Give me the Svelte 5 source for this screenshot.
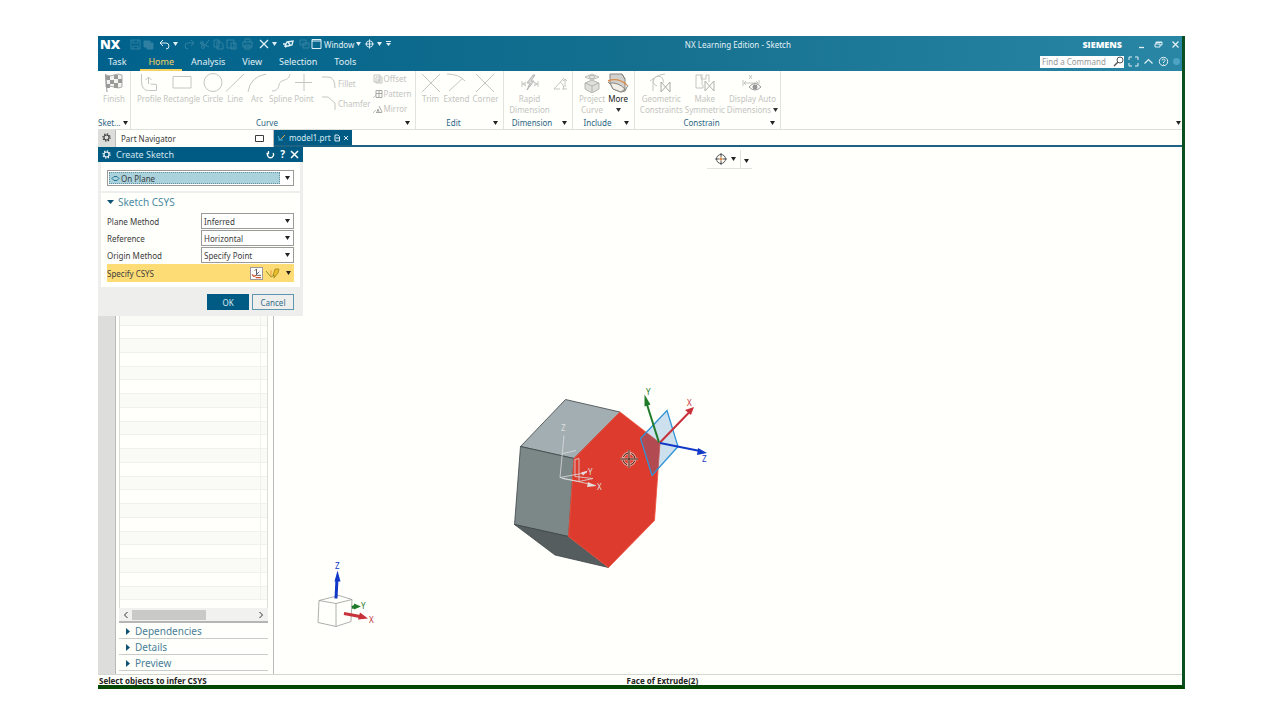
<script lang="ts">
  type Tool = { icon: string; label: string; label2?: string; caret?: boolean; active?: boolean };

  const menus = ['Task', 'Home', 'Analysis', 'View', 'Selection', 'Tools'];
  let activeMenu = $state('Home');

  const curveTools: Tool[] = [
    { icon: 'profile', label: 'Profile' },
    { icon: 'rectangle', label: 'Rectangle' },
    { icon: 'circle', label: 'Circle' },
    { icon: 'line', label: 'Line' },
    { icon: 'arc', label: 'Arc' },
    { icon: 'spline', label: 'Spline' },
    { icon: 'point', label: 'Point' }
  ];
  const editTools: Tool[] = [
    { icon: 'trim', label: 'Trim' },
    { icon: 'extend', label: 'Extend' },
    { icon: 'trim', label: 'Corner' }
  ];
  const dimensionTools: Tool[] = [
    { icon: 'rapid', label: 'Rapid', label2: 'Dimension' },
    { icon: 'angle', label: '' }
  ];
  const includeTools: Tool[] = [
    { icon: 'project', label: 'Project', label2: 'Curve' },
    { icon: 'more', label: 'More', label2: '', caret: true, active: true }
  ];
  const constrainTools: Tool[] = [
    { icon: 'geometric', label: 'Geometric', label2: 'Constraints' },
    { icon: 'symmetric', label: 'Make', label2: 'Symmetric' },
    { icon: 'display', label: 'Display Auto', label2: 'Dimensions', caret: true }
  ];

  // stroked tool icons on a 24x20 grid
  const paths: Record<string, string> = {
    profile: 'M4.500 1v7q0 9.500 7 9.500h8v-6l-6-.5M11.500 11V4M8.500 7l3-3 3 3',
    rectangle: 'M3 3.500h18v11.500H3z',
    circle: 'M12 .5a9 9 0 1 0 0 18a9 9 0 1 0 0-18z',
    line: 'M3 18.500L21 1',
    arc: 'M3 19Q5 4 21 1',
    spline: 'M3 18C12 18 8 10 13 8S20 6 21 1',
    point: 'M12 1v17M3 9.500h17',
    trim: 'M3 1l18 18M21 1L3 19',
    extend: 'M4 18L18 5M2 1q12 0 18 7',
    fillet: 'M0 2h6q7 0 7 11',
    chamfer: 'M0 2h6l7 6v7',
    angle: 'M16 5L6 16h6M14 16h5M12 9q4 2 4 7M17 7v7M15 8l2-2 2 2'
  };

  const sections = ['Dependencies', 'Details', 'Preview'];
  const rows = Array.from({ length: 33 });

  let planeType = $state('On Plane');
  let fields = $state([
    { id: 'plane-method', label: 'Plane Method', value: 'Inferred' },
    { id: 'reference', label: 'Reference', value: 'Horizontal' },
    { id: 'origin-method', label: 'Origin Method', value: 'Specify Point' }
  ]);
</script>

{#snippet caret()}
  <svg class="caret" width="5" height="4" viewBox="0 0 5 4" aria-hidden="true"><path d="M0 0h5L2.500 4z" /></svg>
{/snippet}

{#snippet gear()}
  <svg width="9" height="9" viewBox="0 0 10 10" fill="none" stroke="currentColor" aria-hidden="true">
    <circle cx="5" cy="5" r="2.800" stroke-width="1.200" />
    <circle cx="5" cy="5" r="4" stroke-width="1.300" stroke-dasharray="1.500 1.640" />
  </svg>
{/snippet}

{#snippet target(accent: string)}
  <svg width="12" height="12" viewBox="0 0 12 12" fill="none" stroke="currentColor" aria-hidden="true">
    <circle cx="6" cy="6" r="4.500" />
    <path d="M6 0v4.500M6 7.500V12M0 6h4.500M7.500 6H12" />
    <circle cx="6" cy="6" r="1" fill={accent} stroke={accent} />
  </svg>
{/snippet}

{#snippet toolIcon(name: string)}
  <svg class="tool-icon" width="24" height="20" viewBox="0 0 24 20" fill="none" stroke="currentColor" aria-hidden="true">
    {#if name === 'project'}
      <path d="M5 10l7-3 7 3v6l-7 4-7-4z" fill="#dededa" stroke="#b4b4b0" />
      <path d="M5 10l7 3 7-3M12 13v7" stroke="#b4b4b0" />
      <path d="M5 4l7-3 7 3-7 3z" fill="#eee" stroke="#c0c0bb" />
      <ellipse cx="12" cy="4" rx="3" ry="1.500" stroke="#b4b4b0" />
    {:else if name === 'more'}
      <path d="M4 1h12l3 5v12l-4 1-8-3-3-6z" fill="#d3d1ce" stroke="#8a8682" />
      <path d="M4 10q8-1 15 6l-4 3-8-3z" fill="#f2efe8" stroke="#8a8682" />
      <path d="M2 8q10-4 19 4" stroke="#d88d4c" stroke-width="1.400" />
      <path d="M16 1l3 5M19 18l3-6M2 9l3 3" stroke="#8a8682" />
    {:else if name === 'finish'}
      <path d="M4 2q4 2 8 0t8 0v12q-4 2-8 0t-8 0z" fill="#f2f2ef" stroke="#aaa" />
      <path d="M3.500 1l1.500 18" stroke="#999" />
      <path d="M4 3h4v4H4zM12 2h4v4h-4zM8 7h4v4H8zM16 6h4v4h-4zM4 11h4v4H4zM12 10h4v5h-4z" fill="#9a9a97" stroke="none" />
    {:else if name === 'rapid'}
      <path d="M4 8v6M20 8v6M4 11h4M16 11h4M8 9l-3 2 3 2M16 9l3 2-3 2" />
      <path d="M15 2l-6 8h3l-3 7 7-9h-3l4-6z" fill="#ddd" stroke="#b4b4b1" />
    {:else if name === 'geometric'}
      <path d="M4 18V8q2-6 12-7M1 8l4-3M8 13a5 5 0 1 1 6-3" />
      <path d="M12 9v10l9-10v10z" stroke="#a8a8a5" />
    {:else if name === 'symmetric'}
      <path d="M3 2h5v4h5V2h3v7M3 2v13h7v-3M9 1v11" />
      <path d="M12 8v10l9-10v10z" stroke="#b0b0ad" />
    {:else if name === 'display'}
      <path d="M9 2l3 4M12 2L9 6M3 7v6M19 7v4M4 10h14M6 8l-2 2 2 2M16 8l2 2" />
      <path d="M9 14q6-7 12 0q-6 6-12 0z" fill="#fffffb" stroke="#999" />
      <circle cx="15" cy="14" r="2" fill="#999" stroke="#888" />
    {:else}
      <path d={paths[name]} />
    {/if}
  </svg>
{/snippet}

{#snippet tools(list: Tool[])}
  {#each list as tool}
    <button class="tool" class:active={tool.active} aria-label={tool.label || tool.icon}>
      {@render toolIcon(tool.icon)}
      <span>{tool.label}</span>
      {#if tool.label2 !== undefined}
        <span>{tool.label2}{#if tool.caret}<i>{@render caret()}</i>{/if}</span>
      {/if}
    </button>
  {/each}
{/snippet}

{#snippet groupFooter(name: string)}
  <div class="group-footer">
    <span>{name}</span>
    <button aria-label="{name} options">{@render caret()}</button>
  </div>
{/snippet}

<div class="desktop">
  <div class="window">
    <header>
      <div class="title-row">
        <div class="quick-access">
          <b class="logo">NX</b>
          <div class="quick dim">
            <button aria-label="Save"><svg width="13" height="12" viewBox="0 0 13 12"><path d="M2 2h9v9H2zM4 2v3h5V2M4 11V8h5v3" /></svg></button>
            <button aria-label="Save all"><svg width="13" height="12" viewBox="0 0 13 12"><path d="M2 3h6v6H2zM5 5h6v6H5z" fill="currentColor" /></svg></button>
          </div>
          <div class="quick">
            <button aria-label="Undo"><svg width="13" height="12" viewBox="0 0 13 12"><path d="M5 2L2 5l3 3M2 5h6q3 0 3 3t-3 3" /></svg></button>
            <button class="narrow" aria-label="Undo list">{@render caret()}</button>
          </div>
          <div class="quick dim">
            <button aria-label="Redo"><svg width="13" height="12" viewBox="0 0 13 12"><path d="M8 2l3 3-3 3M11 5H5Q2 5 2 8t3 3" /></svg></button>
          </div>
          <div class="quick dim">
            <button aria-label="Cut"><svg width="13" height="12" viewBox="0 0 13 12"><path d="M2 5l8 4M10 2L5 9" /><circle cx="4" cy="9" r="1.500" /><circle cx="3" cy="5" r="1.500" /></svg></button>
            <button aria-label="Copy"><svg width="13" height="12" viewBox="0 0 13 12"><path d="M2 2h5v7H2zM5 4h4l2 2v5H5z" /></svg></button>
            <button aria-label="Paste"><svg width="13" height="12" viewBox="0 0 13 12"><path d="M2 2h7v8H2zM6 5h5v6H6z" /></svg></button>
          </div>
          <div class="quick dim">
            <button aria-label="Print"><svg width="13" height="12" viewBox="0 0 13 12"><path d="M2 4h9v5H2zM4 4V1h5v3M4 7h5v4H4z" /></svg></button>
          </div>
          <div class="quick">
            <button aria-label="Delete"><svg width="13" height="12" viewBox="0 0 13 12"><path d="M3 2l8 8M11 2l-8 8" stroke-width="1.300" /></svg></button>
            <button class="narrow" aria-label="Delete list">{@render caret()}</button>
          </div>
          <div class="quick">
            <button aria-label="Orient view"><svg width="13" height="12" viewBox="0 0 13 12"><path d="M3 8l2-4 6-1-1 4-4 1zM6 4l2 3M1 6h3M5 8l-2 1" stroke-width="1.400" /></svg></button>
          </div>
          <div class="quick">
            <button class="dim" aria-label="Switch window"><svg width="13" height="12" viewBox="0 0 13 12"><path d="M2 2h6v5H2zM5 5h6v5H5z" /></svg></button>
            <button class="window-menu">
              <svg width="11" height="12" viewBox="0 0 11 12"><path d="M1 1.500h9v9H1zM1 3h9" /></svg>
              Window {@render caret()}
            </button>
          </div>
          <div class="quick">
            <button aria-label="Touch mode"><svg width="11" height="12" viewBox="0 0 12 12"><circle cx="6" cy="6" r="3.500" /><path d="M6 1v10M1 6h10" /></svg></button>
            <button class="narrow" aria-label="Touch mode list">{@render caret()}</button>
            <button class="narrow" aria-label="Customize toolbar"><svg width="7" height="6" viewBox="0 0 7 6"><path d="M1 .5h5" /><path d="M1 2h5L3.500 5z" fill="currentColor" stroke="none" /></svg></button>
          </div>
        </div>
        <div class="title">NX Learning Edition - Sketch</div>
        <div class="window-controls">
          <b>SIEMENS</b>
          <button aria-label="Minimize"><svg width="9" height="9" viewBox="0 0 9 9"><path d="M2 7.500h5" stroke-width="1.300" /></svg></button>
          <button aria-label="Restore"><svg width="9" height="9" viewBox="0 0 9 9"><path d="M1 4h5v3H1zM2 4V2h6v3H6M2 2.500h6" /></svg></button>
          <button aria-label="Close"><svg width="9" height="9" viewBox="0 0 9 9"><path d="M1.500 1.500l6 6M7.500 1.500l-6 6" stroke-width="1.300" /></svg></button>
        </div>
      </div>
      <div class="menu-row">
        <nav>
          {#each menus as menu}
            <button class:selected={menu === activeMenu} onclick={() => (activeMenu = menu)}>{menu}</button>
          {/each}
        </nav>
        <div class="search-area">
          <label class="search">
            <input type="text" placeholder="Find a Command" aria-label="Find a Command" />
            <svg width="11" height="11" viewBox="0 0 11 11"><circle cx="7" cy="4" r="3" /><path d="M5 6L1 10" stroke-width="1.400" /></svg>
          </label>
          <button aria-label="Full screen"><svg width="11" height="11" viewBox="0 0 11 11"><path d="M1 4V1h3M7 1h3v3M10 7v3H7M4 10H1V7" /></svg></button>
          <button aria-label="Minimize ribbon"><svg width="11" height="11" viewBox="0 0 11 11"><path d="M1.500 7.500l4-4 4 4" stroke-width="1.200" /></svg></button>
          <button aria-label="Help"><svg width="11" height="11" viewBox="0 0 11 11"><circle cx="5.500" cy="5.500" r="4.200" /><path d="M4 4.500q0-1.500 1.500-1.500T7 4.500q0 1-1.500 1.500v1M5.500 8v.7" /></svg></button>
          <span class="status-dot"></span>
        </div>
      </div>
    </header>

    <div class="ribbon">
      <section class="group finish-group">
        <div class="group-tools">
          {@render tools([{ icon: 'finish', label: 'Finish' }])}
        </div>
        {@render groupFooter('Sket...')}
      </section>
      <section class="group curve-group">
        <div class="group-tools">
          {@render tools(curveTools)}
          <div class="corner-tools">
            <button>
              <svg width="16" height="16" viewBox="0 0 16 16"><path d={paths.fillet} /></svg>
              Fillet
            </button>
            <button>
              <svg width="16" height="16" viewBox="0 0 16 16"><path d={paths.chamfer} /></svg>
              Chamfer
            </button>
          </div>
          <div class="stacked-tools">
            <button>
              <svg width="10" height="10" viewBox="0 0 10 10"><path d="M1 1h6v7H1zM3 3h6v6H3zM5 5h2v2H5z" /></svg>
              Offset
            </button>
            <button>
              <svg width="10" height="10" viewBox="0 0 10 10"><path d="M0 9l3-3" /><path d="M3 1.500h6v7H3zM3 4.500h6M6 1v8" stroke="#a8a8a5" /></svg>
              Pattern
            </button>
            <button>
              <svg width="10" height="10" viewBox="0 0 10 10"><path d="M0 9l3-3" /><path d="M3 8.500h6M4 8l1-3 1 3M6 2l3 6" stroke="#a8a8a5" /></svg>
              Mirror
            </button>
          </div>
        </div>
        {@render groupFooter('Curve')}
      </section>
      <section class="group edit-group">
        <div class="group-tools">{@render tools(editTools)}</div>
        {@render groupFooter('Edit')}
      </section>
      <section class="group dimension-group">
        <div class="group-tools">{@render tools(dimensionTools)}</div>
        {@render groupFooter('Dimension')}
      </section>
      <section class="group include-group">
        <div class="group-tools">{@render tools(includeTools)}</div>
        {@render groupFooter('Include')}
      </section>
      <section class="group constrain-group">
        <div class="group-tools">{@render tools(constrainTools)}</div>
        {@render groupFooter('Constrain')}
      </section>
      <button class="ribbon-options" aria-label="Ribbon options">{@render caret()}</button>
    </div>

    <div class="workspace">
      <aside>
        <div class="resource-bar">
          <button aria-label="Settings">{@render gear()}</button>
        </div>
        <div class="navigator">
          <div class="navigator-title">
            <span>Part Navigator</span>
            <button aria-label="Undock"><svg width="9" height="9" viewBox="0 0 9 9"><path d="M.5 1.500h8v6h-8z" /></svg></button>
          </div>
          <div class="tree">
            {#each rows as _}
              <div class="tree-row"></div>
            {/each}
          </div>
          <div class="scrollbar">
            <button aria-label="Scroll left"><svg width="6" height="8" viewBox="0 0 6 8"><path d="M4.500 1l-3 3 3 3" /></svg></button>
            <div class="track"><div class="thumb"></div></div>
            <button aria-label="Scroll right"><svg width="6" height="8" viewBox="0 0 6 8"><path d="M1.500 1l3 3-3 3" /></svg></button>
          </div>
          <div class="sections">
            {#each sections as section}
              <button>
                <svg width="4" height="7" viewBox="0 0 4 7"><path d="M0 0l4 3.500L0 7z" /></svg>
                {section}
              </button>
            {/each}
          </div>
        </div>

        <div class="dialog" role="dialog" aria-label="Create Sketch">
          <div class="dialog-title">
            {@render gear()}
            <span>Create Sketch</span>
            <button aria-label="Reset"><svg width="9" height="9" viewBox="0 0 9 9"><path d="M2 3a3 3 0 1 0 5 0M2.500 1v2.500H.5" stroke-width="1.300" /></svg></button>
            <button aria-label="Help">?</button>
            <button aria-label="Close"><svg width="9" height="9" viewBox="0 0 9 9"><path d="M1 1l7 7M8 1L1 8" stroke-width="1.500" /></svg></button>
          </div>
          <div class="card">
            <div class="select plane-type">
              <svg width="9" height="7" viewBox="0 0 9 7"><path d="M1 3.500l2-2h3l2 2-2 2H3z" /></svg>
              <select bind:value={planeType} aria-label="Sketch type">
                <option>On Plane</option>
                <option>On Path</option>
              </select>
              <i>{@render caret()}</i>
            </div>
          </div>
          <div class="card csys">
            <button class="csys-title">
              <svg width="7" height="4" viewBox="0 0 7 4"><path d="M0 0h7L3.500 4z" /></svg>
              Sketch CSYS
            </button>
            {#each fields as field}
              <div class="field">
                <label for={field.id}>{field.label}</label>
                <div class="select">
                  <select id={field.id} bind:value={field.value}>
                    <option>{field.value}</option>
                  </select>
                  <i>{@render caret()}</i>
                </div>
              </div>
            {/each}
            <div class="specify">
              <span>Specify CSYS</span>
              <button class="boxed" aria-label="CSYS dialog">
                <svg width="11" height="11" viewBox="0 0 12 12"><path d="M6 1v7h5M4 3l2-2" stroke="#555" /><path d="M1 7l2 2 3-1M5 10.500h6" stroke="#d0542c" stroke-width="1.300" /><path d="M6 7l3-3" stroke="#2b4f8a" /></svg>
              </button>
              <button aria-label="Inferred CSYS">
                <svg width="14" height="12" viewBox="0 0 14 12"><path d="M0 4l5 6 5-3" stroke="#7a9a2c" /><path d="M5 10V3" stroke="#ef9a40" /><path d="M9 2h4l-1 4-4 5V8H7z" fill="#e8bd28" stroke="#9a7a18" stroke-width=".7" /></svg>
              </button>
              <button class="specify-list" aria-label="CSYS list">{@render caret()}</button>
            </div>
          </div>
          <div class="dialog-actions">
            <button class="ok">OK</button>
            <button>Cancel</button>
          </div>
        </div>
      </aside>

      <main>
        <div class="file-tabs">
          <button class="file-tab">
            <svg width="9" height="9" viewBox="0 0 9 9"><path d="M1 3l2 4 5-5M1 7h5" stroke="#4fb0cf" /><path d="M4 6l4-4" stroke="#e0a04a" /></svg>
            <span>model1.prt</span>
            <svg width="6" height="8" viewBox="0 0 6 8"><path d="M1 1h3l1.500 1.500V7H1zM2 4h3" /></svg>
            <svg width="6" height="8" viewBox="0 0 6 8"><path d="M1 2l4 4M5 2L1 6" /></svg>
          </button>
        </div>
        <div class="canvas">
          <svg class="scene" viewBox="274 147 908 526">
            <g class="solid">
              <polygon points="565.500,399 620,411.500 574,458 520.500,446" fill="#a3aeb2" />
              <polygon points="520.500,446 574,458 568.500,536 514.500,524" fill="#7c8788" />
              <polygon points="514.500,524 568.500,536 608.500,567 555,554.500" fill="#565d5f" />
              <polygon class="face" points="620,411.500 660,442.500 654.500,520 608.500,567 568.500,536 574,458" />
            </g>
            <g class="datum">
              <path d="M560 477l4-42M560 477l36 8M560 477l27-5M563 453l13-3M575 459v17l18 2-14 3v-23zM579 481l-17-3" />
              <path d="M588 481.500l8 4-9 1zM581 472l7-2-5 5z" fill="#e6dcdc" stroke="none" />
              <text x="561" y="430">Z</text>
              <text x="588" y="474">Y</text>
              <text x="597" y="489">X</text>
            </g>
            <g class="cursor">
              <circle cx="629" cy="458.500" r="6" stroke="#e8b0a4" stroke-width="2.500" />
              <path d="M620 458.500h18M629 449.500v18" stroke="#e8b0a4" stroke-width="2.500" />
              <circle cx="629" cy="458.500" r="6" stroke-dasharray="6 3.400" stroke-dashoffset="-1.700" />
              <path d="M620 458.500h18M629 449.500v18" />
            </g>
            <polygon points="667,410 678,446 652,475 640.500,438" fill="#2f7fc0" fill-opacity=".24" stroke="#2f93d8" stroke-width="1.300" />
            <g class="axis red">
              <path d="M660 442l29-30" /><path d="M694 406.500l-3 8-6-5z" /><text x="687" y="405">X</text>
            </g>
            <g class="axis green">
              <path d="M659 442l-12-38" /><path d="M644.500 394l6 10-6 2z" /><text x="646" y="394">Y</text>
            </g>
            <g class="axis blue">
              <path d="M660 442.500l40 8" /><path d="M707 452.500l-10 2 1-7z" /><text x="702" y="461">Z</text>
            </g>
            <g class="view-cube">
              <path d="M319 600l20-5 13 4-1 22-15 5-18-4zM319 600l17 3 16-4M336 603v23" />
            </g>
            <g class="axis blue thick">
              <path d="M336 598l1-20" /><path d="M337.500 570l3 11h-6z" /><text x="335" y="568">Z</text>
            </g>
            <g class="axis green thick">
              <path d="M352 607l3-1" /><path d="M361 606l-7-3v6z" /><text x="361" y="608">Y</text>
            </g>
            <g class="axis red thick">
              <path d="M344 613l16 3" /><path d="M368 618l-10 1 2-7z" /><text x="369" y="622">X</text>
            </g>
          </svg>
          <div class="view-bar">
            <button aria-label="Selection filter">{@render target('#e0813a')}{@render caret()}</button>
            <button class="view-more" aria-label="More view tools">{@render caret()}</button>
          </div>
        </div>
      </main>
    </div>

    <footer>
      <span>Select objects to infer CSYS</span>
      <span>Face of Extrude(2)</span>
    </footer>
  </div>
</div>

<style>
  :global(body) {
    margin: 0;
    background: #fff;
  }

  .desktop {
    box-sizing: border-box;
    display: flex;
    min-height: 100vh;
    padding: 36px 95px 31px 98px;
    font-family: 'Noto Sans', 'Open Sans', sans-serif;
    font-size: 8px;
    line-height: 11px;
    color: #3c3c3c;
  }

  .window {
    flex: 1;
    display: flex;
    flex-direction: column;
    border-right: 3px solid #0b4e20;
    border-bottom: 4px solid #044604;
    background: #fffffb;
  }

  button,
  input,
  select {
    margin: 0;
    padding: 0;
    border: 0;
    background: none;
    font: inherit;
    color: inherit;
  }

  svg {
    display: block;
    flex: none;
    fill: none;
    stroke: currentColor;
  }

  i {
    display: inline-flex;
  }

  .caret {
    fill: currentColor;
    stroke: none;
  }

  header {
    background: linear-gradient(90deg, #00628c, #15708f 50%, #2a86a5);
    color: #e0f0f6;
  }

  .title-row,
  .menu-row {
    display: flex;
    align-items: center;
    justify-content: space-between;
    height: 16px;
  }

  .menu-row {
    height: 19px;
  }

  .quick-access,
  .quick {
    display: flex;
    align-items: center;
  }

  .quick-access {
    gap: 3px;
  }

  .logo {
    width: 26px;
    margin-left: 2px;
    font-family: 'Open Sans', sans-serif;
    font-size: 13px;
    font-weight: 800;
    color: #fff;
  }

  .dim {
    opacity: 0.2;
  }

  .narrow {
    width: 9px;
    display: flex;
    justify-content: center;
  }

  .window-menu {
    display: flex;
    align-items: center;
    gap: 2px;
  }

  .window-controls {
    display: flex;
    align-items: center;
    gap: 8px;
    padding-right: 2px;
  }

  .window-controls b {
    margin-right: 7px;
    font-family: 'Open Sans', sans-serif;
    font-size: 9px;
    font-weight: 800;
    color: #fff;
  }

  nav {
    display: flex;
    align-self: stretch;
    gap: 1px;
    margin-left: 2px;
  }

  nav button {
    padding: 1px 8px 0;
    border-bottom: 2px solid transparent;
    font-size: 9px;
  }

  nav .selected {
    margin-left: 5px;
    border-color: #f3d463;
    color: #f3d463;
  }

  .search-area {
    display: flex;
    align-items: center;
    gap: 4px;
    padding-right: 2px;
  }

  .search {
    display: flex;
    align-items: center;
    width: 84px;
    height: 12px;
    background: #fff;
    color: #555;
  }

  .search input {
    flex: 1;
    min-width: 0;
    padding-left: 2px;
    outline: none;
  }

  .search input::placeholder {
    color: #999;
    opacity: 1;
  }

  .status-dot {
    width: 7px;
    height: 7px;
    border-radius: 50%;
    background: #4da3c2;
  }

  .ribbon {
    display: flex;
    height: 58px;
    border-bottom: 1px solid #dededb;
    color: #c4c4c1;
  }

  .group {
    box-sizing: border-box;
    display: flex;
    flex-direction: column;
    justify-content: space-between;
    border-right: 1px solid #e2e2df;
  }

  .group-tools {
    display: flex;
    justify-content: center;
    gap: 3px;
    padding-top: 2px;
  }

  .tool {
    display: flex;
    flex-direction: column;
    align-items: center;
    min-width: 20px;
    white-space: nowrap;
  }

  .tool span {
    display: flex;
    align-items: center;
    min-height: 11px;
    gap: 2px;
  }

  .tool i {
    color: #333;
  }

  .tool.active {
    color: #222;
  }

  .tool-icon {
    margin: 0 -3px;
  }

  .group-footer {
    display: flex;
    align-items: center;
    height: 13px;
    color: #2a6485;
  }

  .group-footer span {
    flex: 1;
    text-align: center;
  }

  .group-footer button {
    padding: 2px 5px 2px 2px;
    color: #222;
  }

  .finish-group {
    width: 33px;
  }

  .curve-group {
    width: 285px;
  }

  .curve-group .group-tools {
    justify-content: flex-start;
    gap: 2px;
    padding-left: 6px;
  }

  .edit-group {
    width: 88px;
  }

  .dimension-group {
    width: 69px;
  }

  .dimension-group .group-tools {
    gap: 0;
    padding-left: 3px;
  }

  .include-group {
    width: 62px;
  }

  .constrain-group {
    width: 146px;
  }

  .constrain-group .group-tools {
    gap: 2px;
    padding-left: 3px;
  }

  .corner-tools,
  .stacked-tools {
    display: flex;
    flex-direction: column;
    gap: 4px;
  }

  .corner-tools {
    padding: 2px 0 0 6px;
  }

  .corner-tools button,
  .stacked-tools button {
    display: flex;
    align-items: center;
    gap: 1px;
  }

  .corner-tools button {
    gap: 0;
  }

  .ribbon-options {
    align-self: flex-end;
    margin-left: auto;
    padding: 4px 1px;
    color: #222;
  }

  .workspace {
    flex: 1;
    display: flex;
  }

  aside {
    position: relative;
    display: flex;
    width: 176px;
  }

  .resource-bar {
    width: 17px;
    background: #dddddb;
  }

  .resource-bar button {
    padding: 3px 4px;
  }

  .navigator {
    flex: 1;
    display: flex;
    flex-direction: column;
    padding: 0 5px 0 3px;
    border-right: 1px solid #bbb;
    border-left: 1px solid #bbb;
  }

  .navigator-title {
    display: flex;
    align-items: center;
    justify-content: space-between;
    height: 17px;
    padding: 0 4px 0 2px;
  }

  .tree {
    flex: 1;
    display: flex;
    flex-direction: column;
    padding-bottom: 8px;
    border-right: 1px solid #deded9;
    border-left: 1px solid #deded9;
  }

  .tree-row {
    flex: 1;
    display: flex;
    justify-content: flex-end;
    border-bottom: 1px solid #f0f0ed;
  }

  .tree-row::after {
    width: 6px;
    border-left: 1px solid #f0f0ed;
    content: '';
  }

  .tree-row:nth-child(odd) {
    background: #fafaf7;
  }

  .scrollbar {
    display: flex;
    align-items: center;
    height: 13px;
    padding: 0 4px;
    border-bottom: 2px solid #b5b5b3;
    background: #f1f1ef;
    color: #333;
  }

  .track {
    flex: 1;
    padding: 0 3px;
  }

  .thumb {
    width: 60%;
    height: 10px;
    background: #c9c9c7;
  }

  .sections {
    padding-bottom: 3px;
  }

  .sections button {
    display: flex;
    align-items: center;
    gap: 5px;
    width: 100%;
    height: 16px;
    padding: 1px 0 0 7px;
    border-bottom: 1px solid #ccc;
    font-size: 10px;
    color: #4a8099;
  }

  .sections svg {
    fill: #0d5474;
    stroke: none;
  }

  .dialog {
    position: absolute;
    top: 17px;
    left: 0;
    z-index: 1;
    box-sizing: border-box;
    width: 205px;
    background: #eeeeec;
  }

  .dialog-title {
    display: flex;
    align-items: center;
    gap: 5px;
    height: 15px;
    padding: 0 4px;
    background: #005b84;
    color: #fff;
  }

  .dialog-title span {
    flex: 1;
    font-size: 9px;
    color: #cfe4ee;
  }

  .dialog-title button {
    font-size: 10px;
    font-weight: 700;
  }

  .card {
    margin: 0 3px 2px;
    padding: 8px 6px 3px;
    background: #fffffb;
  }

  .card.csys {
    margin-bottom: 0;
    padding: 0 6px 5px;
  }

  .select {
    position: relative;
    box-sizing: border-box;
    display: flex;
    align-items: center;
    height: 16px;
    border: 1px solid #9a9a98;
    background: #fff;
  }

  .select select {
    flex: 1;
    align-self: stretch;
    min-width: 0;
    padding: 0 2px;
    appearance: none;
    outline: none;
  }

  .select i {
    position: absolute;
    right: 3px;
    color: #222;
    pointer-events: none;
  }

  .plane-type {
    padding: 1px 13px 1px 1px;
    margin: 0 0 2px;
  }

  .plane-type > svg {
    position: absolute;
    left: 3px;
    color: #22708f;
  }

  .plane-type select {
    padding-left: 11px;
    border: 1px dotted #64909f;
    background: #a9d2dd;
  }

  .csys-title {
    display: flex;
    align-items: center;
    gap: 4px;
    height: 18px;
    margin-bottom: 2px;
    font-size: 10px;
    color: #4a8aa5;
  }

  .csys-title svg {
    fill: #0d5474;
    stroke: none;
  }

  .field {
    display: flex;
    align-items: center;
    justify-content: space-between;
    margin-bottom: 1px;
  }

  .field .select {
    width: 93px;
  }

  .specify {
    display: flex;
    align-items: center;
    height: 18px;
    padding-right: 3px;
    gap: 3px;
    background: #fddc75;
  }

  .specify span {
    flex: 1;
  }

  .boxed {
    border: 1px solid #999;
    background: #fff;
  }

  .specify-list {
    padding-left: 3px;
    color: #222;
  }

  .dialog-actions {
    display: flex;
    justify-content: flex-end;
    gap: 3px;
    padding: 7px 9px 6px;
  }

  .dialog-actions button {
    box-sizing: border-box;
    width: 42px;
    height: 16px;
    border: 1px solid #5f97b0;
    color: #2f6c8a;
  }

  .dialog-actions .ok {
    border-color: #005b84;
    background: #005b84;
    color: #d8ebf2;
  }

  main {
    flex: 1;
    display: flex;
    flex-direction: column;
  }

  .file-tabs {
    height: 15px;
    border-bottom: 2px solid #1e6384;
  }

  .file-tab {
    display: flex;
    align-items: center;
    gap: 3px;
    height: 15px;
    padding: 0 3px;
    background: #005b84;
    color: #d8ebf2;
  }

  .canvas {
    position: relative;
    flex: 1;
  }

  .scene {
    position: absolute;
    width: 100%;
    height: 100%;
    stroke: none;
  }

  .solid polygon {
    stroke: #3d4547;
    stroke-width: 0.8;
  }

  .solid .face {
    fill: #dc3b2e;
    stroke: #f0503c;
  }

  .scene text {
    font-size: 8px;
    stroke: none;
  }

  .datum {
    stroke: #ddd;
    stroke-width: 0.8;
  }

  .datum text {
    fill: #ddd;
  }

  .cursor {
    stroke: #3c1a17;
  }

  .view-cube {
    stroke: #999;
    stroke-width: 0.8;
  }

  .axis {
    stroke: currentColor;
    stroke-width: 2;
  }

  .axis path:nth-child(2) {
    fill: currentColor;
    stroke: none;
  }

  .axis text {
    fill: currentColor;
  }

  .thick {
    stroke-width: 3;
  }

  .red {
    color: #c8323a;
  }

  .green {
    color: #1f7a2a;
  }

  .blue {
    color: #1238c8;
  }

  .view-bar {
    position: absolute;
    top: 3px;
    left: 50%;
    display: flex;
    margin-left: -21px;
    border-bottom: 1px solid #e2e2df;
    color: #555;
  }

  .view-bar button {
    display: flex;
    align-items: center;
    gap: 4px;
    padding: 3px 4px 3px 8px;
  }

  .view-bar .caret {
    color: #222;
  }

  .view-bar .view-more {
    padding: 7px 3px 3px;
    border-left: 1px solid #e2e2df;
  }

  footer {
    display: grid;
    grid-template-columns: 19fr 20fr;
    align-items: center;
    height: 10px;
    padding-left: 1px;
    border-top: 1px solid #d5d5d2;
    font-weight: 700;
    color: #222;
  }
</style>
